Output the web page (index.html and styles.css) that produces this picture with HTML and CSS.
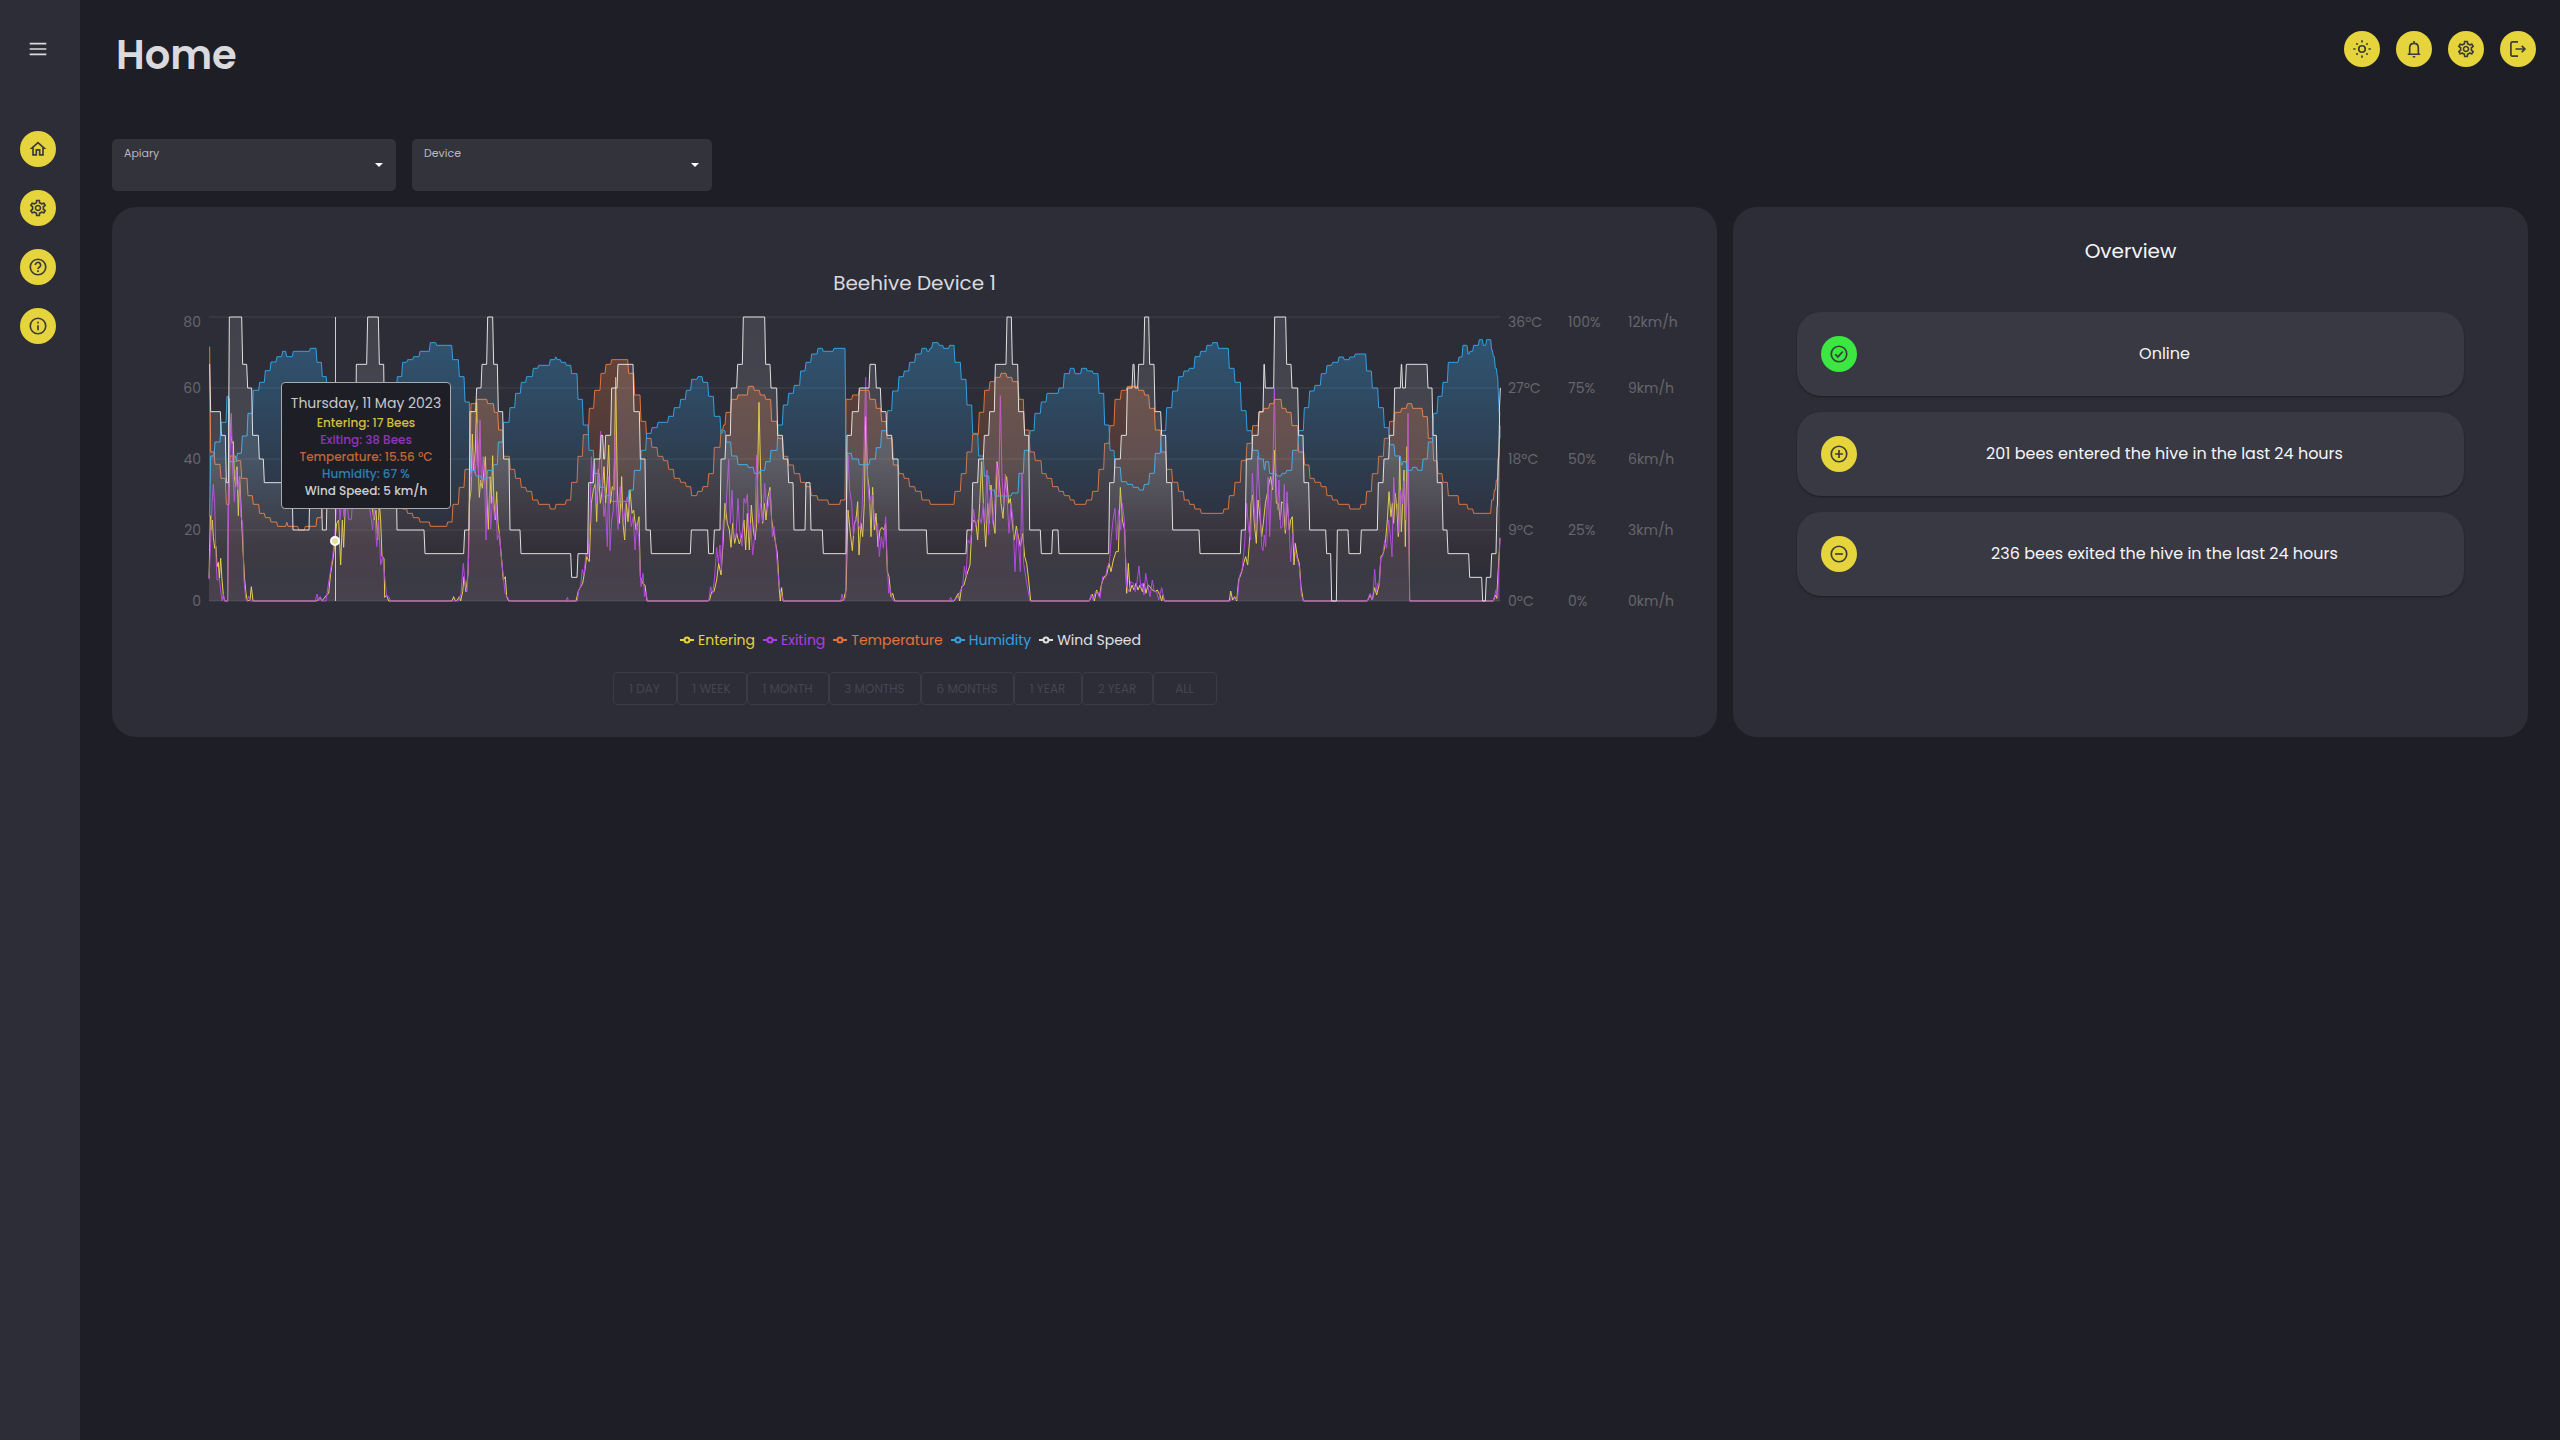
FILE: index.html
```html
<!DOCTYPE html>
<html lang="en">
<head>
<meta charset="utf-8">
<meta name="viewport" content="width=device-width, initial-scale=1">
<title>Home</title>
<link rel="stylesheet" href="styles.css">
</head>
<body>
<svg class="sprite" aria-hidden="true">
  <symbol id="gear" viewBox="0 0 24 24"><path d="M19.43 12.98c.04-.32.07-.64.07-.98 0-.34-.03-.66-.07-.98l2.11-1.65c.19-.15.24-.42.12-.64l-2-3.46c-.09-.16-.26-.25-.44-.25-.06 0-.12.01-.17.03l-2.49 1c-.52-.4-1.08-.73-1.69-.98l-.38-2.65C14.46 2.18 14.25 2 14 2h-4c-.25 0-.46.18-.49.42l-.38 2.65c-.61.25-1.17.59-1.69.98l-2.49-1c-.06-.02-.12-.03-.18-.03-.17 0-.34.09-.43.25l-2 3.46c-.13.22-.07.49.12.64l2.11 1.65c-.04.32-.07.65-.07.98 0 .33.03.66.07.98l-2.11 1.65c-.19.15-.24.42-.12.64l2 3.46c.09.16.26.25.44.25.06 0 .12-.01.17-.03l2.49-1c.52.4 1.08.73 1.69.98l.38 2.65c.03.24.24.42.49.42h4c.25 0 .46-.18.49-.42l.38-2.65c.61-.25 1.17-.59 1.69-.98l2.49 1c.06.02.12.03.18.03.17 0 .34-.09.43-.25l2-3.46c.12-.22.07-.49-.12-.64l-2.11-1.65zm-1.98-1.71c.04.31.05.52.05.73 0 .21-.02.43-.05.73l-.14 1.13.89.7 1.08.84-.7 1.21-1.27-.51-1.04-.42-.9.68c-.43.32-.84.56-1.25.73l-1.06.43-.16 1.13-.2 1.35h-1.4l-.19-1.35-.16-1.13-1.06-.43c-.43-.18-.83-.41-1.23-.71l-.91-.7-1.06.43-1.27.51-.7-1.21 1.08-.84.89-.7-.14-1.13c-.03-.31-.05-.54-.05-.74s.02-.43.05-.73l.14-1.13-.89-.7-1.08-.84.7-1.21 1.27.51 1.04.42.9-.68c.43-.32.84-.56 1.25-.73l1.06-.43.16-1.13.2-1.35h1.39l.19 1.35.16 1.13 1.06.43c.43.18.83.41 1.23.71l.91.7 1.06-.43 1.27-.51.7 1.21-1.07.85-.89.7.14 1.13zM12 8c-2.21 0-4 1.79-4 4s1.79 4 4 4 4-1.79 4-4-1.79-4-4-4zm0 6c-1.1 0-2-.9-2-2s.9-2 2-2 2 .9 2 2-.9 2-2 2z"/></symbol>
  <symbol id="home" viewBox="0 0 24 24"><path d="m12 5.69 5 4.5V18h-2v-6H9v6H7v-7.81l5-4.5M12 3 2 12h3v8h6v-6h2v6h6v-8h3L12 3z"/></symbol>
  <symbol id="menu" viewBox="0 0 24 24"><path d="M2 4.5h20v2H2zM2 11h20v2H2zM2 17.5h20v2H2z"/></symbol>
</svg>

<nav class="sidebar" aria-label="Main">
  <button class="menu-button" type="button" aria-label="Toggle menu"><svg class="icon"><use href="#menu"/></svg></button>
  <a class="round" href="#home" aria-label="Home"><svg class="icon"><use href="#home"/></svg></a>
  <a class="round" href="#settings" aria-label="Settings"><svg class="icon"><use href="#gear"/></svg></a>
  <a class="round" href="#help" aria-label="Help"><svg class="icon line" viewBox="0 0 24 24"><circle cx="12" cy="12" r="9.3"/><path d="M8.9 9.7a3.1 3.1 0 1 1 4.6 2.6c-1 .6-1.5 1.2-1.5 2.2"/><path d="M12 16v2"/></svg></a>
  <a class="round" href="#about" aria-label="About"><svg class="icon line" viewBox="0 0 24 24"><circle cx="12" cy="12" r="9.3"/><path d="M12 11v6.2M12 6.8v2.2"/></svg></a>
</nav>

<div class="page">
  <header class="header">
    <h1>Home</h1>
    <div class="actions">
      <button class="round" type="button" aria-label="Light mode"><svg class="icon line" viewBox="0 0 24 24"><circle cx="12" cy="12" r="3.9"/><path d="M12 1.5v2.7M12 19.8v2.7M1.5 12h2.7M19.8 12h2.7M5.2 5.2l1.6 1.6M17.2 17.2l1.6 1.6M5.2 18.8l1.6-1.6M17.2 6.8l1.6-1.6"/></svg></button>
      <button class="round" type="button" aria-label="Notifications"><svg class="icon line" viewBox="0 0 24 24"><path d="M4.5 18.3h15M6.8 18v-7.5c0-3 2-5.3 5.2-5.3s5.2 2.3 5.2 5.3V18M12 2.5v2.5M10.5 21.3h3"/></svg></button>
      <button class="round" type="button" aria-label="Settings"><svg class="icon"><use href="#gear"/></svg></button>
      <button class="round" type="button" aria-label="Log out"><svg class="icon line" viewBox="0 0 24 24"><path d="M12 3.5H5.5q-2 0-2 2v13q0 2 2 2H12M9 12h11M16.5 8.3l3.8 3.7-3.8 3.7"/></svg></button>
    </div>
  </header>

  <main class="content">
    <form class="filters">
      <div class="field field-apiary"><label for="apiary">Apiary</label><select id="apiary"><option></option></select></div>
      <div class="field field-device"><label for="device">Device</label><select id="device"><option></option></select></div>
    </form>

    <div class="cards">
      <section class="card chart-card">
        <h2>Beehive Device 1</h2>
        <div class="chart">
          <ul class="axis axis-left"><li>80</li><li>60</li><li>40</li><li>20</li><li>0</li></ul>
          <div class="plot">
            <svg class="graph" viewBox="0 81 3873 852" preserveAspectRatio="none" role="img" aria-label="Bee traffic, temperature, humidity and wind speed">
              <defs>
                <linearGradient id="fill-entering" x1="0" y1="0" x2="0" y2="1"><stop offset="0.05" stop-color="#e6d43c" stop-opacity="0.03"/><stop offset="0.95" stop-color="#e6d43c" stop-opacity="0.04"/></linearGradient>
                <linearGradient id="fill-exiting" x1="0" y1="0" x2="0" y2="1"><stop offset="0.05" stop-color="#ae3de3" stop-opacity="0.03"/><stop offset="0.95" stop-color="#ae3de3" stop-opacity="0.05"/></linearGradient>
                <linearGradient id="fill-temperature" x1="0" y1="0" x2="0" y2="1"><stop offset="0.05" stop-color="#e37239" stop-opacity="0.3"/><stop offset="0.9" stop-color="#e37239" stop-opacity="0"/></linearGradient>
                <linearGradient id="fill-humidity" x1="0" y1="0" x2="0" y2="1"><stop offset="0.05" stop-color="#34a0e0" stop-opacity="0.32"/><stop offset="0.8" stop-color="#34a0e0" stop-opacity="0"/></linearGradient>
                <linearGradient id="fill-wind" x1="0" y1="0" x2="0" y2="1"><stop offset="0" stop-color="#fff" stop-opacity="0.1"/><stop offset="0.5" stop-color="#fff" stop-opacity="0.12"/><stop offset="0.8" stop-color="#fff" stop-opacity="0.05"/><stop offset="1" stop-color="#fff" stop-opacity="0.07"/></linearGradient>
              </defs>
              <path class="gridlines" d="M0 81H3873M0 294H3873M0 507H3873M0 720H3873M0 933H3873"/>
              <g id="series"></g>
            </svg>
            <div class="cursor"><span class="cursor-dot"></span></div>
            <div class="tooltip" role="status">
              <p class="tooltip-date">Thursday, 11 May 2023</p>
              <p class="entering">Entering: 17 Bees</p>
              <p class="exiting">Exiting: 38 Bees</p>
              <p class="temperature">Temperature: 15.56 ºC</p>
              <p class="humidity">Humidity: 67 %</p>
              <p class="wind">Wind Speed: 5 km/h</p>
            </div>
          </div>
          <ul class="axis"><li>36ºC</li><li>27ºC</li><li>18ºC</li><li>9ºC</li><li>0ºC</li></ul>
          <ul class="axis"><li>100%</li><li>75%</li><li>50%</li><li>25%</li><li>0%</li></ul>
          <ul class="axis"><li>12km/h</li><li>9km/h</li><li>6km/h</li><li>3km/h</li><li>0km/h</li></ul>
        </div>
        <ul class="legend">
          <li class="entering"><svg viewBox="0 0 14 14"><path d="M0 7h5M9 7h5"/><circle cx="7" cy="7" r="2.5"/></svg>Entering</li>
          <li class="exiting"><svg viewBox="0 0 14 14"><path d="M0 7h5M9 7h5"/><circle cx="7" cy="7" r="2.5"/></svg>Exiting</li>
          <li class="temperature"><svg viewBox="0 0 14 14"><path d="M0 7h5M9 7h5"/><circle cx="7" cy="7" r="2.5"/></svg>Temperature</li>
          <li class="humidity"><svg viewBox="0 0 14 14"><path d="M0 7h5M9 7h5"/><circle cx="7" cy="7" r="2.5"/></svg>Humidity</li>
          <li class="wind"><svg viewBox="0 0 14 14"><path d="M0 7h5M9 7h5"/><circle cx="7" cy="7" r="2.5"/></svg>Wind Speed</li>
        </ul>
        <div class="ranges">
          <button type="button" disabled>1 DAY</button><button type="button" disabled>1 WEEK</button><button type="button" disabled>1 MONTH</button><button type="button" disabled>3 MONTHS</button><button type="button" disabled>6 MONTHS</button><button type="button" disabled>1 YEAR</button><button type="button" disabled>2 YEAR</button><button type="button" disabled>ALL</button>
        </div>
      </section>

      <section class="card overview">
        <h2>Overview</h2>
        <ul class="status-list">
          <li><span class="round ok"><svg class="icon line" viewBox="0 0 24 24"><circle cx="12" cy="12" r="9.3"/><path d="M7.5 12.3l3.2 3.2 5.8-6.5"/></svg></span><p>Online</p></li>
          <li><span class="round"><svg class="icon line" viewBox="0 0 24 24"><circle cx="12" cy="12" r="9.3"/><path d="M12 7.3v9.4M7.3 12h9.4"/></svg></span><p>201 bees entered the hive in the last 24 hours</p></li>
          <li><span class="round"><svg class="icon line" viewBox="0 0 24 24"><circle cx="12" cy="12" r="9.3"/><path d="M7.3 12h9.4"/></svg></span><p>236 bees exited the hive in the last 24 hours</p></li>
        </ul>
      </section>
    </div>
  </main>
</div>
<script src="chart.js"></script>
</body>
</html>
```
FILE: styles.css
```css
* { box-sizing: border-box; margin: 0; padding: 0; }

body {
  display: flex;
  min-height: 100vh;
  background: #1e1e26;
  color: #d9d9de;
  font-family: Poppins, Inter, "Open Sans", sans-serif;
  font-size: 14px;
}

ul { list-style: none; }
.sprite { display: none; }

.sidebar {
  display: flex;
  flex: 0 0 80px;
  flex-direction: column;
  align-items: center;
  gap: 23px;
  padding: 31px 4px 0 0;
  background: #2d2d38;
}

.menu-button {
  width: 36px;
  height: 36px;
  margin-bottom: 41px;
  border: 0;
  background: none;
  color: #d9d9de;
}

.icon { display: block; width: 20px; height: 20px; margin: auto; fill: currentColor; }
.line { fill: none; stroke: currentColor; stroke-width: 2; }

.round {
  display: flex;
  flex: none;
  width: 36px;
  height: 36px;
  border: 0;
  border-radius: 50%;
  background: #e6d43c;
  color: #3b3b38;
}
.ok { background: #3be740; }

.page { flex: 1; min-width: 0; }

.header {
  display: flex;
  justify-content: space-between;
  align-items: flex-start;
  min-height: 139px;
  padding: 29px 24px 0 36px;
}
h1 { font-size: 40px; font-weight: 600; line-height: 52px; }
.actions { display: flex; gap: 16px; padding-top: 2px; }

.content { padding: 0 32px 32px; }

.filters { display: flex; gap: 16px; margin-bottom: 16px; }
.field { position: relative; height: 52px; border-radius: 5px; background: #33333b; }
.field-apiary { width: 284px; }
.field-device { width: 300px; }
.field label {
  position: absolute;
  top: 6px;
  left: 12px;
  color: #b9b9bd;
  font-size: 11px;
  line-height: 16px;
}
.field select {
  width: 100%;
  height: 100%;
  padding: 20px 32px 4px 12px;
  border: 0;
  background: none;
  color: #fff;
  appearance: none;
}
.field::after {
  position: absolute;
  top: 24px;
  right: 13px;
  border: 4px solid transparent;
  border-top-color: #fff;
  border-bottom: 0;
  content: "";
}

.cards { display: grid; grid-template-columns: 1605fr 795fr; gap: 16px; }
.card { min-width: 0; border-radius: 24px; background: #2d2d38; }
h2 { font-size: 20px; font-weight: 400; line-height: 28px; text-align: center; }

.chart-card { padding: 62px 0 32px; }
.chart-card h2 { margin-bottom: -15px; }
.chart { display: grid; grid-template-columns: 97px 1fr 60px 60px 97px; }

.axis { padding-left: 8px; color: #66666a; }
.axis li { display: flex; align-items: center; height: 71px; }
.axis li:first-child { padding-top: 10px; }
.axis-left { padding: 0 8px 0 0; }
.axis-left li { justify-content: flex-end; }

.plot { position: relative; height: 284px; margin-top: 35px; }
.graph { display: block; width: 100%; height: 100%; overflow: visible; }
.gridlines { stroke: #fff; stroke-opacity: 0.05; stroke-width: 2; vector-effect: non-scaling-stroke; }
.series-line { fill: none; stroke: currentColor; stroke-width: 1; vector-effect: non-scaling-stroke; }

.entering { color: #e6d43c; }
.exiting { color: #ae3de3; }
.temperature { color: #e37239; }
.humidity { color: #34a0e0; }
.wind { color: #e0e0e0; }

.cursor { position: absolute; top: 0; bottom: 0; left: 126px; width: 1px; background: #ccc; }
.cursor-dot {
  position: absolute;
  top: 219px;
  left: -5px;
  width: 10px;
  height: 10px;
  border: 2px solid #fff;
  border-radius: 50%;
  background: #e8dda0;
}

.tooltip {
  position: absolute;
  top: 65px;
  left: 72px;
  width: 170px;
  height: 127px;
  padding-top: 10px;
  border: 1px solid #aaa;
  border-radius: 4px;
  background: #1e1e26;
  font-size: 12px;
  font-weight: 500;
  line-height: 17px;
  text-align: center;
  white-space: nowrap;
}
.tooltip-date { margin-bottom: 1px; color: #c8c8cc; font-size: 14px; font-weight: 400; line-height: 20px; }
.tooltip .entering { color: #cfc03a; }
.tooltip .exiting { color: #8f35bb; }
.tooltip .temperature { color: #c46435; }
.tooltip .humidity { color: #2c80b2; }
.tooltip .wind { color: #d0d0d2; }

.legend {
  display: flex;
  justify-content: center;
  gap: 8px;
  margin-top: -7px;
  padding-right: 8px;
  line-height: 20px;
}
.legend li { display: flex; align-items: center; gap: 4px; }
.legend svg { width: 14px; height: 14px; fill: none; stroke: currentColor; stroke-width: 2; }

.ranges {
  display: grid;
  grid-template-columns: 64px 70px 82px 92px 93px 68px 71px 64px;
  justify-content: center;
  margin-top: 22px;
}
.ranges button {
  height: 33px;
  border: 1px solid #3b3b48;
  border-radius: 4px;
  background: none;
  color: #454552;
  font-family: inherit;
  font-size: 12px;
  white-space: nowrap;
}

.overview { padding: 30px 64px; color: #f5f5f7; }
.status-list { display: grid; gap: 16px; margin-top: 47px; }
.status-list li {
  display: flex;
  align-items: center;
  gap: 8px;
  height: 84px;
  padding-left: 24px;
  border-radius: 24px;
  background: #393943;
  box-shadow: 0 1px 2px rgba(0, 0, 0, 0.4);
}
.status-list p { flex: 1; font-size: 16px; line-height: 24px; text-align: center; }
```
FILE: chart.js
```js
// Each series is split into four stretches, each with its own origin on the time axis.
const origins = [-147, 993, 2073, 3153];
const BASE = 933;

// Wind speed in km/h; the rest are heights on the plot.
const wind = [
  '147 10 149 8 181 7 196 5 205 12 245 10 260 9 275 7 295 6 310 5 396 3 447 5 484 3 499 5 586 10 620 12 655 10 671 7 690 6 708 3 792 2 911 3 927 8 947 9 963 10 980 12 998 10 1012 8 1028 6 1047 3 1080 2',
  '92 1 111 2 143 5 160 6 180 7 188 6 194 7 212 9 231 10 279 8 298 6 315 3 331 2 451 3 503 2 520 3 540 6 555 7 571 9 590 10 607 12 674 10 690 9 710 7 727 6 743 5 759 3 795 5 810 3 847 2 918 7 934 8 955 9 987 10 1006 9 1021 8 1038 7 1055 6 1074 3 1159 2',
  '198 3 215 5 233 6 250 7 266 8 283 10 318 12 334 10 353 8 371 7 386 3 421 2 455 3 474 2 626 5 642 6 661 7 679 9 696 10 702 9 713 10 731 12 746 10 762 8 782 7 797 5 815 3 897 2 1021 3 1036 6 1055 7 1074 8 1089 10 1093 9 1121 12 1157 10 1173 9 1193 7',
  '129 5 146 3 197 2 212 0 229 3 264 2 301 3 352 5 369 6 386 7 401 9 421 10 425 9 436 10 501 9 516 7 529 5 546 3 561 2 626 1 665 0 676 1 692 2 708 4 712 6 716 8 718 9'
];
const humidity = [
  '147 677 149 498 162 456 180 397 198 319 206 515 229 490 244 438 261 370 277 301 296 277 313 242 330 216 348 200 365 184 377 200 397 184 448 175 468 217 484 260 499 340 530 420 580 480 620 470 650 400 670 340 690 300 709 260 725 217 740 209 758 200 777 184 808 158 827 166 875 209 895 260 912 336 928 541 945 558 962 567 980 541 998 524 1012 456 1028 397 1047 353 1064 310 1081 277 1097 260 1117 235 1133 226',
  '28 209 44 201 48 209 61 217 76 226 92 251 111 328 127 405 144 481 160 550 178 592 195 617 212 634 264 600 280 541 301 481 317 430 333 413 351 397 383 379 400 353 419 328 436 301 452 268 471 260 486 277 503 319 520 379 540 430 546 422 555 456 572 498 591 524 622 532 640 550 658 541 674 515 690 481 711 405 727 345 743 310 760 286 779 243 795 217 812 192 831 175 847 184 879 175 915 490 934 507 955 524 987 507 1006 473 1022 422 1040 362 1055 303 1074 260 1090 243 1106 217 1124 192 1143 175 1159 184 1167 175',
  '95 158 114 166 128 175 146 166 162 217 181 268 198 345 215 430 233 498 250 558 266 600 283 618 333 609 354 550 370 481 387 422 402 370 421 336 438 310 474 294 490 251 508 235 522 251 542 235 559 243 577 251 594 310 611 405 627 481 642 532 661 575 679 583 697 592 715 600 730 583 746 550 763 490 781 422 797 353 815 303 833 260 849 243 865 235 882 200 899 184 918 166 935 158 952 175 985 235 1002 277 1021 362 1038 422 1055 481 1074 507 1090 540 1094 515 1106 550 1128 558 1143 550 1157 541 1175 481 1193 422',
  '130 353 146 303 162 286 181 251 198 226 215 217 234 201 250 209 267 201 283 192 317 243 334 294 353 353 370 413 386 464 402 498 421 525 426 515 438 541 455 532 470 541 486 507 502 456 518 370 531 319 546 277 562 217 594 201 606 166 621 192 627 184 638 166 655 149 667 166 677 149 692 180 697 200 703 235 709 260 713 340 717 445'
];
const temperature = [
  '147 171 149 486 162 523 180 565 196 643 207 498 226 512 242 565 261 617 277 643 296 670 313 683 330 696 350 709 377 697 381 709 413 720 433 709 468 683 484 630 499 560 560 480 640 440 690 560 709 630 725 657 740 670 757 683 777 696 808 709 860 696 876 643 895 592 912 538 930 341 948 328 980 341 1000 367 1013 420 1028 499 1048 538 1064 565 1081 592 1097 604 1115 630 1133 643',
  '28 657 45 643 76 630 92 577 111 499 127 434 145 355 161 301 180 250 195 223 212 209 263 250 281 315 300 394 317 445 333 472 351 499 368 512 383 538 400 565 419 577 436 590 452 617 470 604 486 590 503 551 520 472 540 420 548 405 555 367 572 328 591 315 622 289 640 301 658 315 674 328 692 394 711 445 728 499 743 525 760 551 779 577 795 590 811 617 831 630 863 643 899 630 915 328 935 315 955 301 987 328 1006 355 1022 394 1038 445 1057 525 1074 551 1090 565 1106 590 1124 604 1143 630 1168 643',
  '162 604 181 551 198 486 215 433 235 367 251 301 267 275 284 262 300 250 318 262 335 275 354 328 370 420 387 486 403 512 423 551 438 565 455 590 474 604 490 617 508 630 522 643 557 630 575 604 594 538 611 460 627 407 642 328 661 301 679 289 713 301 731 315 746 355 763 420 781 486 797 538 815 577 833 604 850 630 866 643 882 657 901 670 969 657 985 617 1002 577 1021 512 1038 460 1055 407 1074 367 1089 355 1106 341 1121 328 1143 355 1157 367 1173 407 1193 486',
  '131 525 147 565 162 577 181 590 198 617 215 630 232 643 267 657 300 643 317 604 334 551 353 499 370 445 386 394 402 367 422 355 439 341 455 355 486 380 502 445 518 512 531 551 546 577 562 617 594 643 621 657 638 670 692 630 700 600 706 570 712 500 717 407'
];
const entering = [
  '147 865 151 677 154 720 157 690 160 740 164 775 168 770 171 830 175 817 178 865 182 805 186 870 190 915 194 933 203 933 207 325 210 400 213 440 217 460 220 455 223 560 227 590 231 530 235 677 239 560 243 650 246 715 250 800 254 870 258 910 262 933 270 930 274 890 279 933 470 933 480 922 486 933 492 925 500 915 506 910 512 850 520 800 524 760 530 700 536 690 542 825 547 690 551 772 556 640 562 600 570 640 578 560 590 600 600 550 610 600 620 540 630 600 636 650 642 690 648 660 653 750 658 640 662 690 666 800 672 805 674 922 680 915 686 933 876 933 881 920 886 933 892 930 898 920 902 933 908 905 912 860 918 905 924 850 928 640 933 600 937 432 941 540 946 480 950 335 954 510 958 622 962 570 967 595 972 540 976 500 980 600 985 718 990 560 994 640 998 497 1002 640 1006 690 1010 605 1014 700 1018 730 1024 800 1030 870 1036 860 1040 920 1046 933',
  '108 933 115 903 122 890 128 880 134 845 140 800 148 815 154 640 160 600 166 580 170 695 175 538 181 640 187 600 192 530 197 640 202 560 206 465 211 640 217 590 222 600 227 262 232 600 238 700 242 640 245 560 249 700 254 750 259 640 264 695 270 600 276 670 281 660 288 720 293 700 297 680 301 860 308 880 315 885 321 933 503 933 509 930 515 905 522 905 530 870 536 820 543 855 549 760 555 640 562 700 568 720 573 772 578 700 584 760 590 730 598 762 606 735 612 690 617 780 622 670 628 780 634 645 640 720 645 750 650 700 657 337 664 640 668 700 673 640 678 690 684 620 690 592 695 690 700 720 706 755 712 790 718 900 721 933 725 893 729 933 905 933 912 925 918 900 924 660 930 720 937 782 943 700 948 690 953 635 957 795 963 700 968 740 973 640 977 380 983 560 988 600 993 740 998 592 1003 720 1008 670 1014 770 1020 720 1026 712 1032 720 1037 700 1042 845 1047 860 1053 920 1058 910 1064 933',
  '162 933 175 910 179 933 185 890 192 885 200 855 210 825 216 700 222 690 228 700 233 750 239 640 245 515 250 640 257 770 263 640 268 700 273 585 279 690 285 730 291 515 297 560 303 640 309 685 314 600 320 560 326 640 331 625 337 700 343 750 349 708 355 740 361 770 368 730 374 800 380 820 386 870 392 933 568 933 577 912 583 933 590 900 598 920 604 885 612 860 620 855 627 820 633 845 640 810 648 785 655 785 661 592 667 690 674 720 680 910 685 820 690 905 696 885 702 900 708 880 714 900 720 885 727 905 732 880 738 910 744 885 750 890 757 900 765 905 772 900 780 915 785 933 789 915 793 933 988 933 992 903 998 930 1004 920 1010 933 1016 870 1024 850 1031 820 1037 800 1043 825 1048 760 1053 640 1058 615 1063 700 1069 760 1074 630',
  '0 680 5 740 10 700 16 640 22 610 27 580 32 560 38 600 44 480 49 640 55 640 61 690 65 635 70 640 76 730 82 640 88 720 92 690 97 680 102 825 106 760 112 800 118 820 123 890 130 933 322 933 330 915 337 930 344 893 350 915 357 885 363 800 370 790 376 760 382 690 387 605 393 680 397 640 401 700 406 610 411 660 415 740 419 500 424 725 428 640 432 540 436 770 441 470 446 640 449 933 700 933 706 915 710 925 720 745'
];
const exiting = [
  '147 868 152 760 156 640 160 583 164 640 168 800 171 870 178 868 182 900 186 933 190 912 194 933 203 933 206 600 210 480 214 370 218 540 223 635 228 540 233 600 238 560 243 680 248 700 252 870 257 925 261 933 266 918 270 933 466 933 471 912 476 933 481 920 486 933 498 933 504 890 510 850 518 800 524 740 530 640 536 600 540 690 546 620 552 680 558 600 566 688 574 688 580 600 590 640 600 600 610 650 620 580 630 660 638 720 643 640 650 770 656 690 662 825 668 800 674 860 680 920 686 920 692 933 896 933 903 910 910 820 915 880 921 905 926 800 930 540 935 560 940 480 944 550 948 520 952 400 956 560 960 390 964 580 970 500 974 560 978 750 982 560 988 565 992 718 998 620 1004 690 1008 640 1012 750 1018 730 1024 800 1030 860 1035 910 1042 920 1048 933',
  '78 933 82 922 86 933 112 933 116 900 122 890 127 838 132 855 138 790 144 800 150 690 154 500 159 580 164 520 170 640 176 560 182 423 187 600 192 680 196 640 202 770 206 560 210 782 215 690 220 660 225 435 229 640 234 718 240 590 245 650 251 700 257 640 262 620 268 655 274 710 280 680 285 780 290 700 296 740 303 890 309 850 314 920 318 905 322 933 506 933 512 890 518 910 524 860 530 772 535 820 540 765 544 840 550 690 556 690 561 600 566 508 571 700 576 600 582 745 588 740 594 625 599 720 606 768 612 625 617 640 622 613 628 740 632 700 638 795 644 740 650 495 656 700 662 640 668 695 674 580 680 660 685 648 691 600 697 740 702 710 708 770 714 850 719 895 724 910 730 933 902 933 906 912 911 933 917 920 920 640 924 495 929 600 935 640 940 738 947 680 954 700 960 718 966 660 972 480 977 262 982 560 988 640 993 620 998 615 1003 690 1008 720 1013 700 1018 800 1024 740 1030 775 1037 680 1041 800 1046 910 1050 895 1056 925 1062 933',
  '148 933 152 922 158 933 170 925 176 915 182 900 188 890 193 828 198 860 204 750 210 760 216 720 221 658 227 710 233 690 238 680 244 700 250 640 255 700 261 540 266 735 272 600 278 700 284 640 290 520 296 620 301 317 306 560 311 650 316 552 322 640 327 730 333 640 339 690 345 845 351 720 356 770 361 845 366 552 371 820 377 860 382 890 390 933 568 933 573 915 580 930 586 905 593 905 600 925 608 860 616 865 622 830 628 820 634 740 639 690 645 655 650 750 656 660 662 720 667 640 673 690 680 890 687 905 692 875 700 880 706 905 711 875 717 828 722 890 727 880 732 915 737 850 743 885 750 920 757 870 763 905 770 905 776 930 785 893 793 933 990 933 996 920 1004 925 1012 930 1018 860 1026 840 1034 760 1040 640 1046 720 1052 750 1057 550 1062 640 1067 720 1073 500',
  '0 640 5 770 9 782 13 735 17 770 24 562 29 740 34 600 38 580 43 295 48 560 53 660 57 570 62 715 68 710 73 583 77 720 81 605 86 690 92 815 98 730 104 780 112 808 118 830 124 915 131 933 322 933 330 910 338 930 344 838 349 905 353 880 358 890 362 805 368 800 374 752 380 775 386 690 391 735 396 800 401 562 406 640 412 640 417 730 422 600 427 640 432 572 437 690 441 640 444 370 449 933 700 933 708 900 713 925 720 742'
];

function points(stretches, scale = v => v) {
  return stretches.flatMap((text, i) => {
    const n = text.split(' ').map(Number);
    const out = [];
    for (let k = 0; k < n.length; k += 2) out.push([n[k] + origins[i], scale(n[k + 1])]);
    return out;
  });
}

// Hold each reading until the next one, joined by a slightly slanted edge.
function stepped(list) {
  const out = [list[0]];
  for (let i = 1; i < list.length; i++) {
    out.push([list[i][0], list[i - 1][1]], [list[i][0] + 3, list[i][1]]);
  }
  out.push([3873, list[list.length - 1][1]]);
  return out;
}

const series = [
  ['entering', points(entering)],
  ['exiting', points(exiting)],
  ['temperature', stepped(points(temperature))],
  ['humidity', stepped(points(humidity))],
  ['wind', stepped(points(wind, v => BASE - v * 71))]
];

document.getElementById('series').innerHTML = series.map(([name, list]) => {
  const d = 'M' + list.map(p => p.join(' ')).join('L');
  return `<path fill="url(#fill-${name})" d="${d}V${BASE}H0Z"/><path class="series-line ${name}" d="${d}"/>`;
}).join('');
```
